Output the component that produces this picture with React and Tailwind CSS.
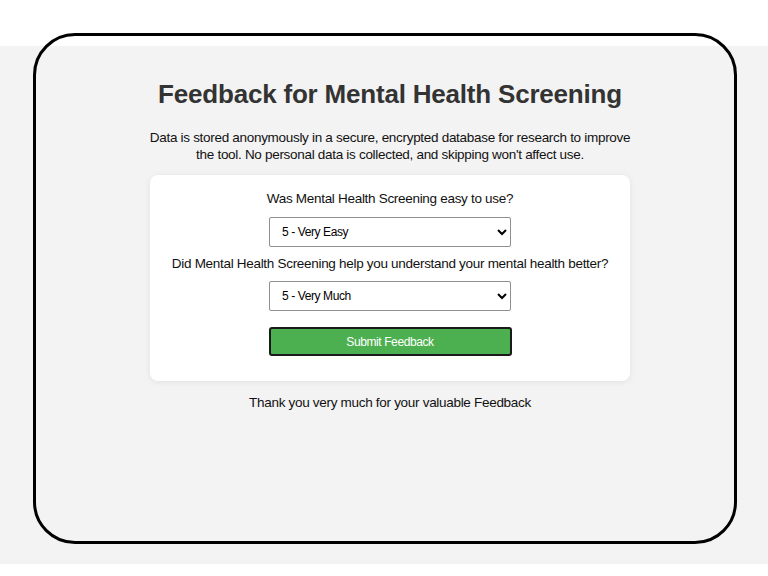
import React, { useState } from 'react';

function App() {
  const [ease, setEase] = useState('5');
  const [helped, setHelped] = useState('5');

  return (
    <div
      className="h-[576px] w-[768px] overflow-hidden bg-[linear-gradient(to_bottom,#ffffff_46px,#f3f3f3_46px,#f3f3f3_564px,#ffffff_564px)] pt-[33px] pl-[33px]"
      style={{ fontFamily: '"Liberation Sans", Arial, sans-serif' }}
    >
      {/* Frame */}
      <div className="h-[511px] w-[704px] rounded-[42px] border-[3px] border-black pl-[10px] flex flex-col items-center">
        <h1 className="mt-[40px] text-[26px] leading-[36px] font-bold tracking-[-0.2px] text-[#333333]">
          Feedback for Mental Health Screening
        </h1>

        <p className="mt-[17px] w-[490px] text-center text-[13.5px] leading-[17px] tracking-[-0.3px] text-[#111111]">
          Data is stored anonymously in a secure, encrypted database for research to improve
          the tool. No personal data is collected, and skipping won't affect use.
        </p>

        {/* Card */}
        <div className="mt-[12px] w-[480px] rounded-[8px] bg-white shadow-[0_1px_6px_rgba(0,0,0,0.08)] pt-[15px] pb-[25px] flex flex-col items-center">
          <label className="text-[13.5px] leading-[18px] tracking-[-0.3px] text-[#111111]">
            Was Mental Health Screening easy to use?
          </label>
          <select
            value={ease}
            onChange={(e) => setEase(e.target.value)}
            className="mt-[9px] h-[30px] w-[242px] rounded-[2px] border border-[#8f8f8f] bg-white px-[8px] text-[12px] tracking-[-0.4px] text-black"
          >
            <option value="5">5 - Very Easy</option>
            <option value="4">4 - Easy</option>
            <option value="3">3 - Neutral</option>
            <option value="2">2 - Difficult</option>
            <option value="1">1 - Very Difficult</option>
          </select>

          <label className="mt-[8px] text-[13.5px] leading-[18px] tracking-[-0.3px] text-[#111111]">
            Did Mental Health Screening help you understand your mental health better?
          </label>
          <select
            value={helped}
            onChange={(e) => setHelped(e.target.value)}
            className="mt-[8px] h-[30px] w-[242px] rounded-[2px] border border-[#8f8f8f] bg-white px-[8px] text-[12px] tracking-[-0.4px] text-black"
          >
            <option value="5">5 - Very Much</option>
            <option value="4">4 - Much</option>
            <option value="3">3 - Somewhat</option>
            <option value="2">2 - A Little</option>
            <option value="1">1 - Not at All</option>
          </select>

          <button className="mt-[16px] h-[29px] w-[243px] rounded-[3px] border-2 border-[#1a1a1a] bg-[#4caf50] text-[12px] tracking-[-0.4px] text-white">
            Submit Feedback
          </button>
        </div>

        <p className="mt-[13px] text-[13.5px] leading-[18px] tracking-[-0.3px] text-[#111111]">
          Thank you very much for your valuable Feedback
        </p>
      </div>
    </div>
  );
}

export default App;
